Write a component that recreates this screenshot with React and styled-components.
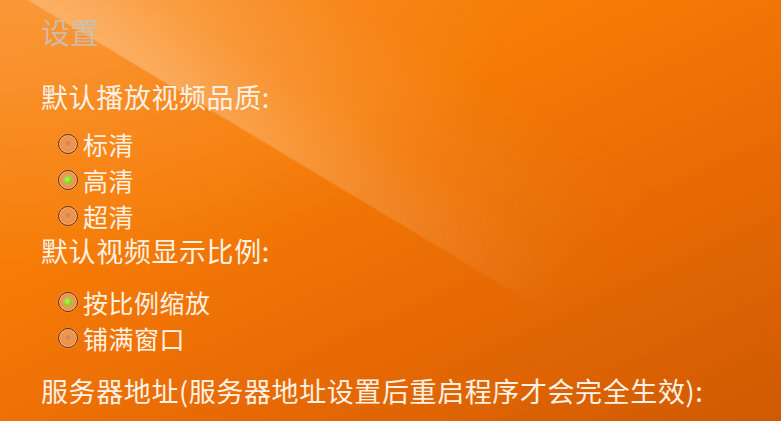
import styled, { createGlobalStyle } from 'styled-components';

const GlobalStyle = createGlobalStyle`
  html, body {
    margin: 0;
    padding: 0;
  }
  body {
    font-family: "Noto Sans CJK SC", "Noto Sans", sans-serif;
  }
`;

const qualityOptions = [
  { label: '标清', checked: false },
  { label: '高清', checked: true },
  { label: '超清', checked: false },
];

const ratioOptions = [
  { label: '按比例缩放', checked: true },
  { label: '铺满窗口', checked: false },
];

function RadioList({ options, top }) {
  return (
    <RadioList.Wrapper $top={top}>
      {options.map((opt) => (
        <RadioList.Item key={opt.label}>
          <RadioList.Mark $checked={opt.checked} />
          {opt.label}
        </RadioList.Item>
      ))}
    </RadioList.Wrapper>
  );
}

RadioList.Wrapper = styled.ul`
  list-style: none;
  margin: ${(p) => p.$top}px 0 0;
  padding: 0 0 0 17px;
  display: flex;
  flex-direction: column;
`;

RadioList.Item = styled.li`
  display: flex;
  align-items: center;
  gap: 5px;
  height: 36px;
  font-size: 25px;
  letter-spacing: 0.5px;
  color: #fdf1e4;
`;

RadioList.Mark = styled.span`
  position: relative;
  width: 18px;
  height: 18px;
  flex: none;
  border-radius: 50%;
  border: 1.5px solid #5e2f0c;
  background: radial-gradient(circle at 50% 45%, #f39a52 0%, #f0904a 60%, #f7b27a 100%);
  box-shadow: inset 0 0 0 1px rgba(255, 205, 160, 0.6), 0 0 0 0.5px rgba(255, 190, 140, 0.5);

  &::after {
    content: '';
    position: absolute;
    left: 50%;
    top: 50%;
    width: ${(p) => (p.$checked ? 8 : 6)}px;
    height: ${(p) => (p.$checked ? 8 : 6)}px;
    border-radius: 50%;
    transform: translate(-50%, -50%);
    background: ${(p) =>
      p.$checked
        ? 'radial-gradient(circle at 40% 40%, #b8f45c 0%, #74c81e 80%)'
        : 'radial-gradient(circle at 50% 30%, #c8845a 0%, #e8985c 90%)'};
    box-shadow: ${(p) =>
      p.$checked ? '0 0 3px rgba(170, 240, 80, 0.8)' : 'none'};
  }
`;

function App() {
  return (
    <App.Wrapper>
      <GlobalStyle />
      <App.Title>设置</App.Title>
      <App.Heading $top={32}>默认播放视频品质:</App.Heading>
      <RadioList options={qualityOptions} top={13} />
      <App.Heading $top={1}>默认视频显示比例:</App.Heading>
      <RadioList options={ratioOptions} top={17} />
      <App.Heading $top={19}>服务器地址(服务器地址设置后重启程序才会完全生效):</App.Heading>
    </App.Wrapper>
  );
}

App.Wrapper = styled.div`
  position: relative;
  z-index: 0;
  width: 781px;
  height: 421px;
  box-sizing: border-box;
  overflow: hidden;
  padding: 13px 0 0 41px;
  display: flex;
  flex-direction: column;
  background:
    radial-gradient(ellipse at 5% 0%, rgba(255, 190, 140, 0.3) 0%, transparent 45%),
    linear-gradient(155deg, #f88714 0%, #f67c06 35%, #e86a04 65%, #cf5a02 100%);

  /* diagonal light sweep across the top-left */
  &::before {
    content: '';
    position: absolute;
    inset: 0;
    z-index: -1;
    background: linear-gradient(
      31deg,
      transparent 49%,
      rgba(255, 232, 200, 0.4) 49.3%,
      rgba(255, 220, 180, 0.18) 58%,
      transparent 72%
    );
    -webkit-mask-image: radial-gradient(ellipse 75% 100% at 22% 0%, #000 0%, rgba(0, 0, 0, 0.5) 55%, transparent 100%);
    mask-image: radial-gradient(ellipse 75% 100% at 22% 0%, #000 0%, rgba(0, 0, 0, 0.5) 55%, transparent 100%);
  }
`;

App.Title = styled.h1`
  margin: 0;
  font-size: 29px;
  font-weight: 400;
  line-height: 36px;
  color: rgba(200, 194, 188, 0.85);
`;

App.Heading = styled.h2`
  margin: ${(p) => p.$top}px 0 0;
  font-size: 27px;
  font-weight: 400;
  letter-spacing: 0.6px;
  line-height: 32px;
  color: #fdf1e4;
  white-space: nowrap;
`;

export default App;
